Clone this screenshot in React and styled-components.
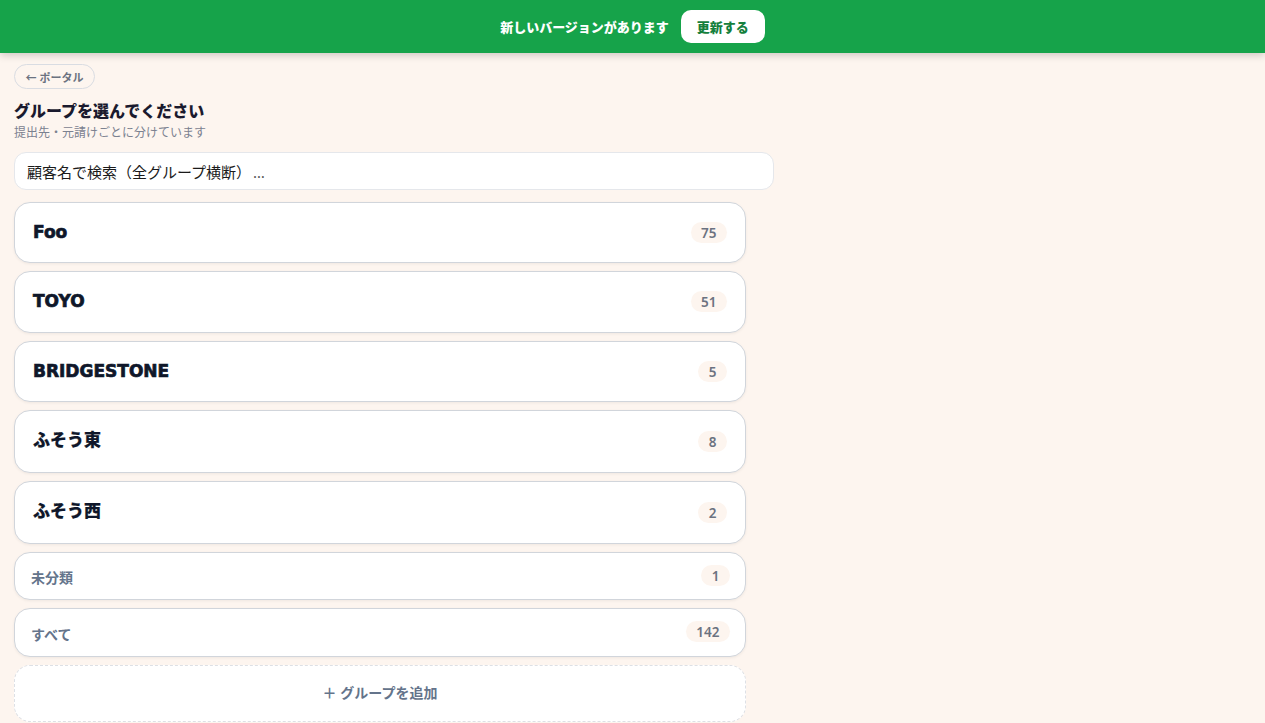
import React from 'react'
import styled, { createGlobalStyle } from 'styled-components'

const GlobalStyle = createGlobalStyle`
  html, body {
    margin: 0;
    padding: 0;
    height: 723px;
    overflow: hidden;
    background: #fdf5ef;
    font-family: "Noto Sans", "Noto Sans CJK JP", sans-serif;
  }
  * { box-sizing: border-box; }
`

const Banner = styled.div`
  height: 53px;
  background: #16a34a;
  box-shadow: 0 2px 8px rgba(0, 0, 0, 0.2);
  display: flex;
  align-items: center;
  justify-content: center;
  gap: 12px;
`

const BannerText = styled.span`
  color: #fff;
  font-size: 13px;
  font-weight: 800;
`

const UpdateButton = styled.button`
  width: 84px;
  height: 33px;
  padding: 0;
  border: 0;
  border-radius: 10px;
  background: #fff;
  color: #15803d;
  font: 800 13px "Noto Sans", "Noto Sans CJK JP", sans-serif;
`

const Main = styled.div`
  padding: 11px 14px 0;
`

const BackPill = styled.button`
  display: block;
  width: 81px;
  height: 25px;
  padding: 0;
  border: 1px solid #d9dce2;
  border-radius: 13px;
  background: transparent;
  color: #6b7280;
  font: 700 11px "Noto Sans", "Noto Sans CJK JP", sans-serif;
`

const Title = styled.h1`
  margin: 12px 0 0;
  font-size: 16px;
  line-height: 20px;
  font-weight: 800;
  color: #1a1a2e;
`

const Subtitle = styled.p`
  margin: 4px 0 0;
  font-size: 12px;
  line-height: 16px;
  font-weight: 400;
  color: #7b8190;
`

const SearchBox = styled.div`
  width: 760px;
  height: 38px;
  margin-top: 11px;
  padding: 5px 12px 0;
  border: 1px solid #e5e7eb;
  border-radius: 12px;
  background: #fff;
  color: #1a1a1a;
  font-size: 15px;
  line-height: 28px;
`

const Ellipsis = styled.span`
  margin-left: 2px;
  color: #555;
`

const GroupList = styled.div`
  width: 732px;
  margin-top: 12px;
  display: flex;
  flex-direction: column;
  gap: 8px;
`

const GroupCard = styled.div`
  height: ${(props) => props.height}px;
  padding: 0 18px;
  border: 1px solid #d1d5db;
  border-radius: 16px;
  background: #fff;
  box-shadow: 0 1px 3px rgba(0, 0, 0, 0.06);
  display: flex;
  align-items: center;
  justify-content: space-between;
`

const MinorCard = styled(GroupCard)`
  padding: 0 15px 0 16px;
`

const GroupName = styled.span`
  margin-top: ${(props) => props.offset}px;
  font-size: 17px;
  font-weight: 900;
  color: #0f172a;
  font-family: "DejaVu Sans", "Noto Sans CJK JP", sans-serif;
  -webkit-text-stroke: ${(props) => props.stroke}px #0f172a;
`

const MinorName = styled.span`
  margin-top: 3px;
  font-size: 14px;
  font-weight: 700;
  color: #64748b;
`

const Count = styled.span`
  height: 21px;
  min-width: 28px;
  padding: 0 10.5px;
  border-radius: 11px;
  background: #fdf5ef;
  color: #6b7280;
  font-size: 13.5px;
  font-weight: 600;
  line-height: 22px;
  text-align: center;
`

const MinorCount = styled(Count)`
  margin-top: -1px;
`

const AddCard = styled.div`
  height: 57px;
  padding-bottom: 2px;
  border: 1px dashed #dde0e5;
  border-radius: 16px;
  background: #fff;
  color: #64748b;
  font-size: 14px;
  font-weight: 700;
  display: flex;
  align-items: center;
  justify-content: center;
`

const groups = [
  { name: 'Foo', count: 75, height: 61.3, offset: -2, stroke: 0.7 },
  { name: 'TOYO', count: 51, height: 61.3, offset: -2, stroke: 0.7 },
  { name: 'BRIDGESTONE', count: 5, height: 61.3, offset: -1, stroke: 0.7 },
  { name: 'ふそう東', count: 8, height: 62.9, offset: -5, stroke: 0.2 },
  { name: 'ふそう西', count: 2, height: 62.9, offset: -5, stroke: 0.2 },
]

const minorGroups = [
  { name: '未分類', count: 1 },
  { name: 'すべて', count: 142 },
]

export default function App() {
  return (
    <>
      <GlobalStyle />
      <Banner>
        <BannerText>新しいバージョンがあります</BannerText>
        <UpdateButton>更新する</UpdateButton>
      </Banner>
      <Main>
        <BackPill>← ポータル</BackPill>
        <Title>グループを選んでください</Title>
        <Subtitle>提出先・元請けごとに分けています</Subtitle>
        <SearchBox>
          顧客名で検索（全グループ横断）<Ellipsis>…</Ellipsis>
        </SearchBox>
        <GroupList>
          {groups.map((g) => (
            <GroupCard key={g.name} height={g.height}>
              <GroupName offset={g.offset} stroke={g.stroke}>{g.name}</GroupName>
              <Count>{g.count}</Count>
            </GroupCard>
          ))}
          {minorGroups.map((g) => (
            <MinorCard key={g.name} height={48.5}>
              <MinorName>{g.name}</MinorName>
              <MinorCount>{g.count}</MinorCount>
            </MinorCard>
          ))}
          <AddCard>＋ グループを追加</AddCard>
        </GroupList>
      </Main>
    </>
  )
}
